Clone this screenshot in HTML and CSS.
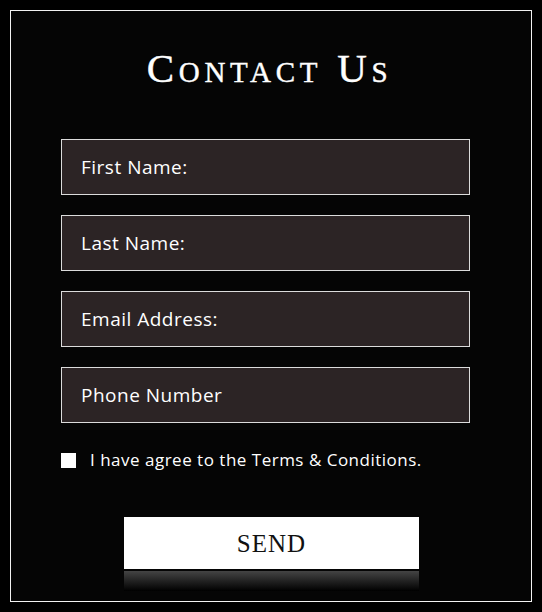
FILE: index.html
```html
<!DOCTYPE html>
<html lang="en">
<head>
    <meta charset="UTF-8">
    <meta name="viewport" content="width=device-width, initial-scale=1">
    <title>Contact Us</title>
    <link rel="stylesheet" href="styles.css">
</head>
<body>
<div class="contact">
    <h1 class="contact-title">Contact Us</h1>

    <form class="contact-form">
        <input class="field" type="text" placeholder="First Name:">
        <input class="field" type="text" placeholder="Last Name:">
        <input class="field" type="email" placeholder="Email Address:">
        <input class="field" type="tel" placeholder="Phone Number">

        <label class="agree">
            <span class="agree-box"></span>
            <span class="agree-text">I have agree to the Terms &amp; Conditions.</span>
        </label>

        <div class="send-wrap">
            <button class="send-btn" type="button">SEND</button>
            <div class="send-reflection"></div>
        </div>
    </form>
</div>
</body>
</html>
```

FILE: styles.css
```css
body {
    margin: 0;
    padding: 0;
    background: #000;
}

.contact {
    box-sizing: border-box;
    margin: 10px 0 0 10px;
    width: 522px;
    height: 592px;
    border: 1px solid #f2f2f2;
    background: #050505;
    padding: 37px 0 0 0;
}

.contact-title {
    margin: 0;
    padding-right: 3px;
    font-family: "Liberation Serif", serif;
    font-weight: normal;
    font-size: 41px;
    line-height: 41px;
    font-variant: small-caps;
    letter-spacing: 4.7px;
    text-align: center;
    color: #fff;
    -webkit-text-stroke: 0.4px #fff;
}

.contact-form {
    display: flex;
    flex-direction: column;
    margin-top: 50px;
    padding-left: 50px;
}

.field {
    box-sizing: border-box;
    width: 409px;
    height: 56px;
    margin: 0 0 20px 0;
    padding: 0 19px;
    border: 1px solid #dcdcdc;
    border-radius: 0;
    background: #2c2425;
    color: #fff;
    font-family: "Open Sans", sans-serif;
    font-size: 19px;
    letter-spacing: 0.5px;
    outline: none;
}

.field::placeholder {
    color: #fff;
    opacity: 1;
}

.agree {
    display: flex;
    align-items: center;
    gap: 14px;
    height: 20px;
    margin-top: 7px;
}

.agree-box {
    width: 15px;
    height: 15px;
    background: #fff;
}

.agree-text {
    font-family: "Open Sans", sans-serif;
    font-size: 17px;
    line-height: 20px;
    letter-spacing: 0.5px;
    color: #fff;
}

.send-wrap {
    display: flex;
    flex-direction: column;
    width: 295px;
    margin: 47px 0 0 63px;
}

.send-btn {
    height: 52px;
    border: none;
    border-radius: 0;
    background: #fff;
    color: #111;
    font-family: "Liberation Serif", serif;
    font-size: 25px;
    letter-spacing: 1px;
    padding: 2px 0 0 0;
    cursor: pointer;
}

.send-reflection {
    height: 20px;
    margin-top: 2px;
    background: linear-gradient(#444, #000);
}
```
